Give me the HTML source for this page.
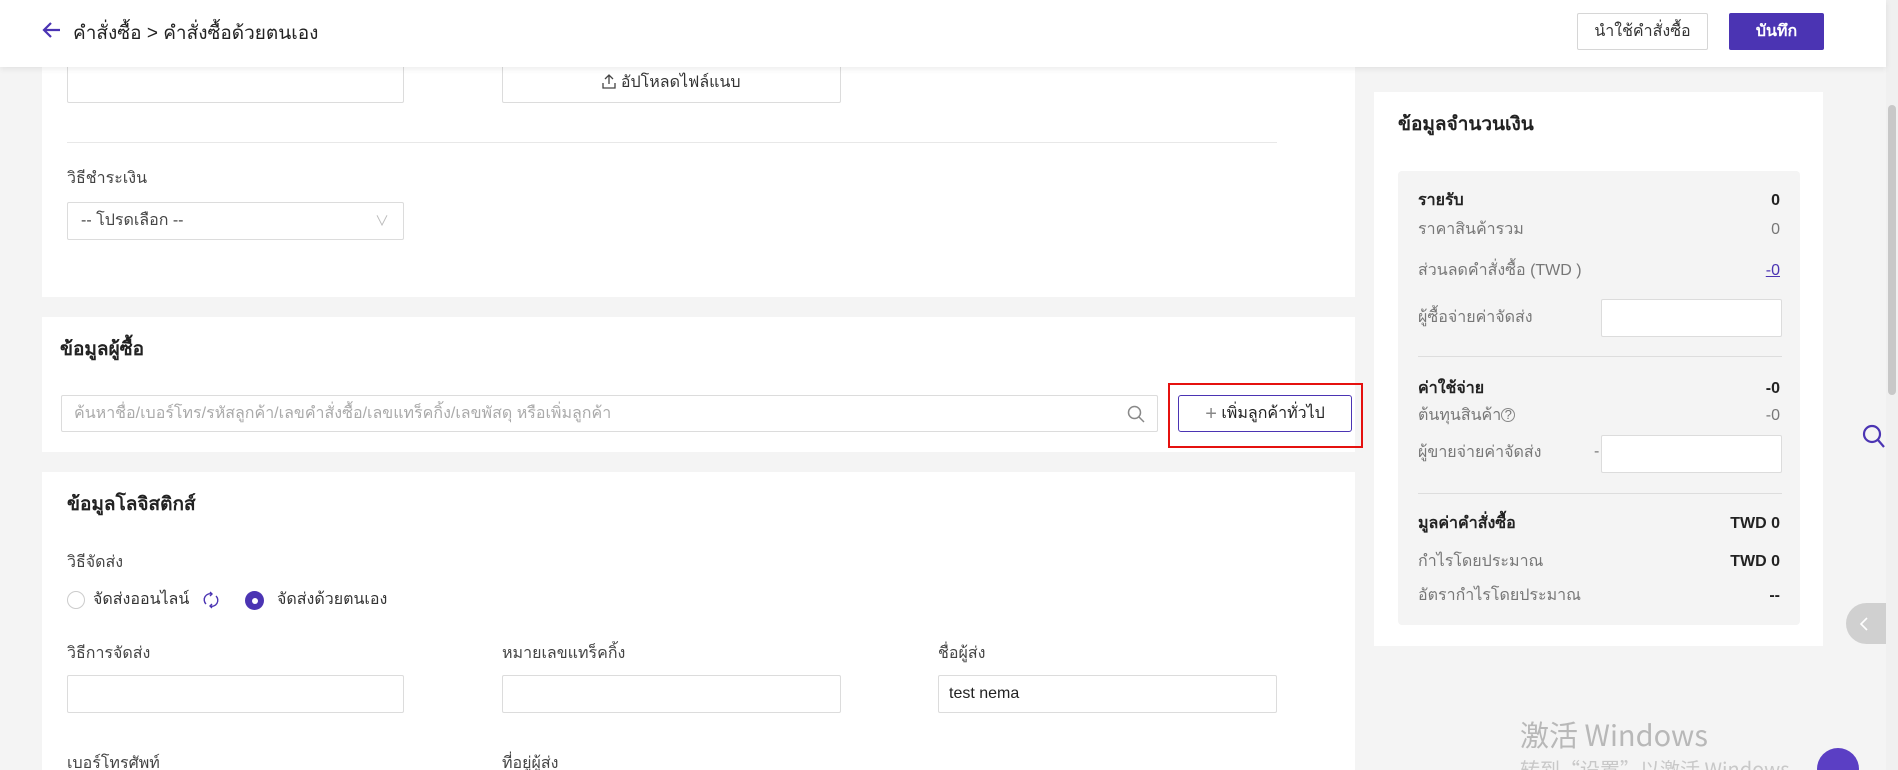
<!DOCTYPE html>
<html style="width:1898px;height:770px;overflow:hidden"><head><meta charset="utf-8"><style>
*{box-sizing:border-box;margin:0;padding:0}
body{width:1898px;height:770px;overflow:hidden;background:#f4f4f4;font-family:"Liberation Sans","Noto Sans CJK SC",sans-serif;color:#333;position:relative;font-size:16px}
.abs{position:absolute}
.card{position:absolute;background:#fff}
.inp{position:absolute;border:1px solid #dcdcdc;background:#fff;border-radius:2px}
.lbl{position:absolute;font-size:16px;color:#444;line-height:20px}
.h{position:absolute;font-size:19px;font-weight:bold;color:#222;line-height:24px}
.row{position:absolute;left:20px;right:20px;font-size:16px;color:#777;line-height:20px}
.row span{position:absolute;right:0}
.row.b{color:#222;font-weight:bold}
</style></head><body>
<div class="abs" style="left:0;top:0;width:1886px;height:67px;background:#fff;box-shadow:0 2px 6px rgba(0,0,0,.08);z-index:5">
  <svg class="abs" style="left:42px;top:21px" width="20" height="18" viewBox="0 0 20 18"><path d="M18 9H3M9 2L2 9l7 7" stroke="#4b34b3" stroke-width="2.2" fill="none"/></svg>
  <div class="abs" style="left:73px;top:18px;font-size:19px;color:#222">คำสั่งซื้อ &gt; คำสั่งซื้อด้วยตนเอง</div>
  <div class="abs" style="left:1577px;top:13px;width:131px;height:37px;border:1px solid #d6d6d6;border-radius:2px;text-align:center;line-height:35px;font-size:16px;color:#333">นำใช้คำสั่งซื้อ</div>
  <div class="abs" style="left:1729px;top:13px;width:95px;height:37px;background:#4b34b3;border-radius:2px;text-align:center;line-height:37px;font-size:16px;color:#fff;font-weight:bold">บันทึก</div>
</div>
<div class="abs" style="left:1886px;top:0;width:12px;height:770px;background:#f0f0f0"></div>
<div class="abs" style="left:1888px;top:105px;width:8px;height:290px;background:#c8c8c8;border-radius:4px"></div>

<div class="card" style="left:42px;top:40px;width:1313px;height:257px">
  <div class="inp" style="left:25px;top:23px;width:337px;height:40px"></div>
  <div class="inp" style="left:460px;top:23px;width:339px;height:40px;text-align:center;line-height:38px;color:#333">
    <svg width="14" height="16" viewBox="0 0 14 16" style="vertical-align:-2px"><path d="M7 11V2M3 6l4-4 4 4M1 10v5h12v-5" stroke="#444" stroke-width="1.3" fill="none"/></svg> อัปโหลดไฟล์แนบ</div>
  <div class="abs" style="left:25px;top:102px;width:1210px;height:1px;background:#e8e8e8"></div>
  <div class="lbl" style="left:25px;top:129px">วิธีชำระเงิน</div>
  <div class="inp" style="left:25px;top:162px;width:337px;height:38px;line-height:36px;padding-left:13px;color:#444">-- โปรดเลือก --<span style="position:absolute;right:14px;color:#bbb;font-size:14px">∨</span></div>
</div>

<div class="card" style="left:42px;top:317px;width:1313px;height:135px">
  <div class="h" style="left:18px;top:21px">ข้อมูลผู้ซื้อ</div>
  <div class="inp" style="left:19px;top:78px;width:1097px;height:37px;line-height:35px;padding-left:12px;color:#aaa;font-size:16px">ค้นหาชื่อ/เบอร์โทร/รหัสลูกค้า/เลขคำสั่งซื้อ/เลขแทร็คกิ้ง/เลขพัสดุ หรือเพิ่มลูกค้า
    <svg class="abs" style="right:12px;top:9px" width="18" height="18" viewBox="0 0 18 18"><circle cx="7.5" cy="7.5" r="6" stroke="#888" stroke-width="1.5" fill="none"/><path d="M12 12l5 5" stroke="#888" stroke-width="1.5"/></svg></div>
  <div class="abs" style="left:1126px;top:66px;width:195px;height:65px;border:2px solid #e5110f"></div>
  <div class="abs" style="left:1136px;top:78px;width:174px;height:37px;border:1px solid #4b34b3;border-radius:3px;text-align:center;line-height:35px;color:#222;font-size:16px"><span style="color:#888;font-size:20px;vertical-align:-2px">+</span> เพิ่มลูกค้าทั่วไป</div>
</div>

<div class="card" style="left:42px;top:472px;width:1313px;height:298px">
  <div class="h" style="left:25px;top:21px">ข้อมูลโลจิสติกส์</div>
  <div class="lbl" style="left:25px;top:81px">วิธีจัดส่ง</div>
  <div class="abs" style="left:25px;top:119px;width:18px;height:18px;border:1px solid #ccc;border-radius:50%"></div>
  <div class="lbl" style="left:51px;top:118px;color:#333">จัดส่งออนไลน์</div>
  <svg class="abs" style="left:160px;top:119px" width="18" height="18" viewBox="0 0 18 18"><path d="M4 13A6 6 0 0 1 10 3M14 5a6 6 0 0 1-6 10M8 1l2 2-2 2M10 13l-2 2 2 2" stroke="#4b34b3" stroke-width="1.4" fill="none"/></svg>
  <div class="abs" style="left:203px;top:119px;width:19px;height:19px;background:#4b34b3;border-radius:50%"><div class="abs" style="left:6.5px;top:6.5px;width:6px;height:6px;background:#fff;border-radius:50%"></div></div>
  <div class="lbl" style="left:235px;top:118px;color:#333">จัดส่งด้วยตนเอง</div>
  <div class="lbl" style="left:25px;top:172px">วิธีการจัดส่ง</div>
  <div class="lbl" style="left:460px;top:172px">หมายเลขแทร็คกิ้ง</div>
  <div class="lbl" style="left:896px;top:172px">ชื่อผู้ส่ง</div>
  <div class="inp" style="left:25px;top:203px;width:337px;height:38px"></div>
  <div class="inp" style="left:460px;top:203px;width:339px;height:38px"></div>
  <div class="inp" style="left:896px;top:203px;width:339px;height:38px;line-height:36px;padding-left:10px;color:#222">test nema</div>
  <div class="lbl" style="left:25px;top:282px">เบอร์โทรศัพท์</div>
  <div class="lbl" style="left:460px;top:282px">ที่อยู่ผู้ส่ง</div>
</div>

<div class="card" style="left:1374px;top:92px;width:449px;height:554px">
  <div class="h" style="left:24px;top:21px">ข้อมูลจำนวนเงิน</div>
  <div class="abs" style="left:24px;top:79px;width:402px;height:454px;background:#f4f4f4;border-radius:4px">
    <div class="row b" style="top:20px">รายรับ<span>0</span></div>
    <div class="row" style="top:49px">ราคาสินค้ารวม<span>0</span></div>
    <div class="row" style="top:90px">ส่วนลดคำสั่งซื้อ (TWD )<span style="color:#4b34b3;text-decoration:underline">-0</span></div>
    <div class="row" style="top:137px">ผู้ซื้อจ่ายค่าจัดส่ง</div>
    <div class="inp" style="left:203px;top:128px;width:181px;height:38px"></div>
    <div class="abs" style="left:20px;right:18px;top:185px;height:1px;background:#ddd"></div>
    <div class="row b" style="top:208px">ค่าใช้จ่าย<span>-0</span></div>
    <div class="row" style="top:235px">ต้นทุนสินค้า<span style="position:static;font-size:13px;border:1px solid #888;border-radius:50%;display:inline-block;width:14px;height:14px;line-height:12px;text-align:center;vertical-align:1px">?</span><span>-0</span></div>
    <div class="row" style="top:272px">ผู้ขายจ่ายค่าจัดส่ง</div>
    <div class="abs" style="left:196px;top:272px;color:#777">-</div>
    <div class="inp" style="left:203px;top:264px;width:181px;height:38px"></div>
    <div class="abs" style="left:20px;right:18px;top:322px;height:1px;background:#ddd"></div>
    <div class="row b" style="top:343px">มูลค่าคำสั่งซื้อ<span>TWD 0</span></div>
    <div class="row" style="top:381px">กำไรโดยประมาณ<span style="color:#222;font-weight:bold">TWD 0</span></div>
    <div class="row" style="top:415px">อัตรากำไรโดยประมาณ<span style="color:#222;font-weight:bold">--</span></div>
  </div>
</div>

<svg class="abs" style="left:1862px;top:424px" width="24" height="26" viewBox="0 0 24 26"><circle cx="10" cy="10" r="8" stroke="#4b34b3" stroke-width="2.2" fill="none"/><path d="M16 16l6 7" stroke="#4b34b3" stroke-width="2.2"/></svg>
<div class="abs" style="left:1846px;top:603px;width:40px;height:41px;background:#d0d0d0;border-radius:21px 0 0 21px"><svg class="abs" style="left:13px;top:13px" width="10" height="16" viewBox="0 0 10 16"><path d="M8 2L2 8l6 6" stroke="#fff" stroke-width="1.6" fill="none"/></svg></div>
<div class="abs" style="left:1520px;top:716px;font-size:29px;line-height:36px;color:#b8b8b8;font-family:'Noto Sans CJK SC',sans-serif">激活 Windows</div>
<div class="abs" style="left:1520px;top:757px;font-size:20px;line-height:24px;color:#c8c8c8;font-family:'Noto Sans CJK SC',sans-serif">转到“设置”以激活 Windows。</div>
<div class="abs" style="left:1817px;top:748px;width:42px;height:42px;background:#5b3fc4;border-radius:50%"></div>
</body></html>
